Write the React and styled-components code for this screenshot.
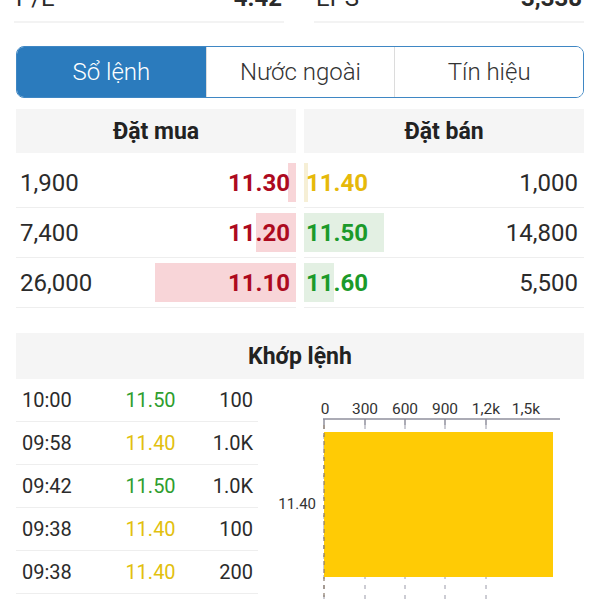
import React from 'react'
import styled, { createGlobalStyle } from 'styled-components'

const GlobalStyle = createGlobalStyle`
    html, body {
        margin: 0;
        padding: 0;
        background: #ffffff;
        overflow: hidden;
    }
    body {
        font-family: Roboto, 'Noto Sans', 'Liberation Sans', sans-serif;
        color: #2b2b2b;
    }
`

const Page = styled.div`
    width: 600px;
    height: 600px;
    overflow: hidden;
    display: flex;
    flex-direction: column;
`

const Stats = styled.div`
    display: grid;
    grid-template-columns: 1fr 1fr;
    column-gap: 30px;
    padding: 0 16px 0 14px;
    margin-top: -13px;
`

const StatCell = styled.div`
    display: flex;
    justify-content: space-between;
    align-items: center;
    height: 36px;
    padding: 0 2px 13px 2px;
    box-sizing: border-box;
    border-bottom: 2px solid #f3f3f3;
    font-size: 24px;
    & > b {
        font-weight: 700;
    }
`

const Tabs = styled.div`
    margin: 23px 16px 0 16px;
    height: 52px;
    box-sizing: border-box;
    display: grid;
    grid-template-columns: repeat(3, 1fr);
    border: 1px solid #3f87c4;
    border-radius: 8px;
    overflow: hidden;
`

const Tab = styled.div`
    display: flex;
    align-items: center;
    justify-content: center;
    font-size: 24px;
    font-weight: 300;
    color: ${(p) => (p.active ? '#ffffff' : '#333333')};
    background: ${(p) => (p.active ? '#2b7bbd' : '#ffffff')};
    & + & {
        border-left: 1px solid #dcdcdc;
    }
`

const Book = styled.div`
    display: grid;
    grid-template-columns: 1fr 1fr;
    column-gap: 8px;
    padding: 0 16px;
    margin-top: 11px;
`

const Side = styled.div`
    display: flex;
    flex-direction: column;
`

const Header = styled.div`
    height: ${(p) => p.h || 44}px;
    background: #f5f5f5;
    display: flex;
    align-items: center;
    justify-content: center;
    font-size: 23px;
    font-weight: 700;
    color: #222;
    margin-bottom: ${(p) => p.gap || 0}px;
`

const BookRow = styled.div`
    position: relative;
    height: 50px;
    display: flex;
    align-items: center;
    justify-content: space-between;
    flex-direction: ${(p) => (p.sell ? 'row-reverse' : 'row')};
    padding: ${(p) => (p.sell ? '0 6px 0 2px' : '0 6px 0 4px')};
    border-bottom: 1px solid #eeeeee;
    box-sizing: border-box;
    font-size: 24px;
`

const Depth = styled.div`
    position: absolute;
    top: 5px;
    bottom: 5px;
    ${(p) => (p.sell ? 'left: 0;' : 'right: 0;')}
    background: ${(p) => p.color};
`

const Qty = styled.span`
    position: relative;
    color: #2b2b2b;
`

const Price = styled.span`
    position: relative;
    font-weight: 700;
    color: ${(p) => p.color};
`

const Match = styled.div`
    margin: 25px 16px 0 16px;
    display: flex;
    flex-direction: column;
`

const MatchBody = styled.div`
    display: flex;
`

const Trades = styled.div`
    width: 242px;
    display: flex;
    flex-direction: column;
`

const TradeRow = styled.div`
    height: 43px;
    display: grid;
    grid-template-columns: 86px 1fr 60px;
    align-items: center;
    padding: 0 5px 0 6px;
    border-bottom: 1px solid #eeeeee;
    box-sizing: border-box;
    font-size: 20px;
    & > span:nth-child(2) {
        text-align: center;
        color: ${(p) => p.color};
    }
    & > span:nth-child(3) {
        text-align: right;
    }
`

const Chart = styled.svg`
    display: block;
    flex: none;
`

const RED = '#ad0a1e'
const YELLOW = '#e6b90a'
const GREEN = '#1b9a2a'

const buys = [
    { qty: '1,900', price: '11.30', bar: 8 },
    { qty: '7,400', price: '11.20', bar: 40 },
    { qty: '26,000', price: '11.10', bar: 141 },
]

const sells = [
    { qty: '1,000', price: '11.40', bar: 4, color: YELLOW, bg: '#f6efd6' },
    { qty: '14,800', price: '11.50', bar: 80, color: GREEN, bg: '#e3f0e3' },
    { qty: '5,500', price: '11.60', bar: 30, color: GREEN, bg: '#e3f0e3' },
]

const trades = [
    { time: '10:00', price: '11.50', vol: '100', color: '#2e9e2e' },
    { time: '09:58', price: '11.40', vol: '1.0K', color: '#e2c00e' },
    { time: '09:42', price: '11.50', vol: '1.0K', color: '#2e9e2e' },
    { time: '09:38', price: '11.40', vol: '100', color: '#e2c00e' },
    { time: '09:38', price: '11.40', vol: '200', color: '#e2c00e' },
]

const ticks = [
    { label: '0', x: 66 },
    { label: '300', x: 107 },
    { label: '600', x: 147 },
    { label: '900', x: 187 },
    { label: '1,2k', x: 228 },
    { label: '1,5k', x: 268 },
]

const VolumeChart = () => (
    <Chart width="326" height="221" viewBox="0 0 326 221">
        {ticks.slice(0, 5).map((t) => (
            <line
                key={'g' + t.label}
                x1={t.x}
                x2={t.x}
                y1="46"
                y2="221"
                stroke="#9a9aa8"
                strokeWidth="1"
                strokeDasharray="4 6"
            />
        ))}
        <rect x="66" y="53" width="229" height="145" fill="#ffcb05" />
        <line x1="66" x2="66" y1="46" y2="221" stroke="#8a7a6a" strokeWidth="1.2" strokeDasharray="4 4" />
        <line x1="65" x2="302" y1="40" y2="40" stroke="#8f8f9c" strokeWidth="1.5" />
        {ticks.slice(0, 5).map((t) => (
            <line key={'t' + t.label} x1={t.x} x2={t.x} y1="40" y2="46" stroke="#8f8f9c" strokeWidth="1.5" />
        ))}
        {ticks.map((t) => (
            <text
                key={t.label}
                x={t.x + (t.label === '0' ? 1 : 0)}
                y="35"
                fontSize="15.5"
                fill="#333"
                textAnchor="middle"
                fontFamily="Roboto, sans-serif"
            >
                {t.label}
            </text>
        ))}
        <text x="58" y="130" fontSize="15" fill="#333" textAnchor="end" fontFamily="Roboto, sans-serif">
            11.40
        </text>
    </Chart>
)

export default function App() {
    return (
        <Page>
            <GlobalStyle />
            <Stats>
                <StatCell>
                    <span>P/E</span>
                    <b>4.42</b>
                </StatCell>
                <StatCell>
                    <span>EPS</span>
                    <b>3,338</b>
                </StatCell>
            </Stats>
            <Tabs>
                <Tab active>Sổ lệnh</Tab>
                <Tab>Nước ngoài</Tab>
                <Tab>Tín hiệu</Tab>
            </Tabs>
            <Book>
                <Side>
                    <Header gap={5}>Đặt mua</Header>
                    {buys.map((r) => (
                        <BookRow key={r.price}>
                            <Depth color="#f8d5d8" style={{ width: r.bar }} />
                            <Qty>{r.qty}</Qty>
                            <Price color={RED}>{r.price}</Price>
                        </BookRow>
                    ))}
                </Side>
                <Side>
                    <Header gap={5}>Đặt bán</Header>
                    {sells.map((r) => (
                        <BookRow key={r.price} sell>
                            <Depth sell color={r.bg} style={{ width: r.bar }} />
                            <Qty>{r.qty}</Qty>
                            <Price color={r.color}>{r.price}</Price>
                        </BookRow>
                    ))}
                </Side>
            </Book>
            <Match>
                <Header h={46}>Khớp lệnh</Header>
                <MatchBody>
                    <Trades>
                        {trades.map((t, i) => (
                            <TradeRow key={i} color={t.color}>
                                <span>{t.time}</span>
                                <span>{t.price}</span>
                                <span>{t.vol}</span>
                            </TradeRow>
                        ))}
                    </Trades>
                    <VolumeChart />
                </MatchBody>
            </Match>
        </Page>
    )
}
